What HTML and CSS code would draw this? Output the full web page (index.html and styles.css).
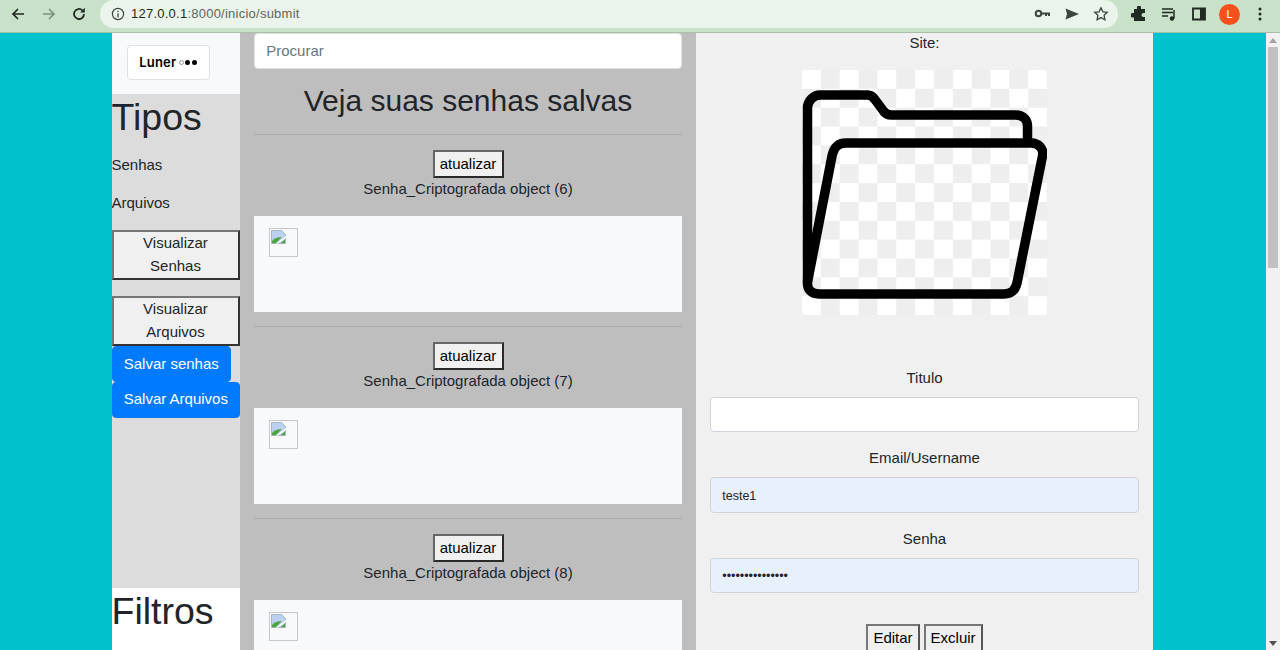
FILE: index.html
```html
<!DOCTYPE html>
<html lang="en">
<head>
  <meta charset="UTF-8">
  <meta name="viewport" content="width=device-width, initial-scale=1.0">
  <title>Luner</title>
  <link rel="stylesheet" href="styles.css">
</head>
<body>
  <!-- barra do navegador -->
  <div class="browser">
    <div class="navs">
      <svg class="ico" viewBox="0 0 16 16"><path d="M14 8H3M8 3L3 8l5 5" fill="none" stroke="#1f2a20" stroke-width="1.7"/></svg>
      <svg class="ico" viewBox="0 0 16 16"><path d="M2 8h11M8 3l5 5-5 5" fill="none" stroke="#7f917f" stroke-width="1.7"/></svg>
      <svg class="ico" viewBox="0 0 16 16"><path d="M13 8a5 5 0 1 1-1.600-3.700" fill="none" stroke="#1f2a20" stroke-width="1.800"/><path d="M13.800 1.800v4.600H9.200z" fill="#1f2a20"/></svg>
    </div>
    <div class="omnibox">
      <svg class="info" viewBox="0 0 14 14"><circle cx="7" cy="7" r="5.600" fill="none" stroke="#3c463c" stroke-width="1.200"/><path d="M7 6.200v4M7 3.800v1.300" stroke="#3c463c" stroke-width="1.300"/></svg>
      <span class="url"><b>127.0.0.1</b>:8000/inicio/submit</span>
      <div class="omni-right">
        <svg class="ico" viewBox="0 0 16 16"><circle cx="4.500" cy="7.500" r="2.800" fill="none" stroke="#3c463c" stroke-width="2"/><path d="M7.500 7.500H15v2.500M12 7.500V10" fill="none" stroke="#3c463c" stroke-width="2"/></svg>
        <svg class="ico" viewBox="0 0 16 16"><path d="M1.500 2.500L15 8 1.500 13.500 3 8z" fill="#3c463c"/></svg>
        <svg class="ico" viewBox="0 0 16 16"><path d="M8 1.800l1.900 4 4.400.5-3.200 3 .8 4.400L8 11.600l-3.900 2.100.8-4.400-3.200-3 4.400-.5z" fill="none" stroke="#3c463c" stroke-width="1.300"/></svg>
      </div>
    </div>
    <div class="tools">
      <svg class="ico" viewBox="0 0 16 16"><path d="M6 1.500a2 2 0 0 1 4 0V3h4v4h-1.500a2 2 0 0 0 0 4H14v4H3v-3.500H1.500a2.200 2.200 0 0 1 0-4.400H3V3h3z" fill="#1f2a20"/></svg>
      <svg class="ico" viewBox="0 0 16 16"><path d="M1 3h11M1 6.500h11M1 10h6" stroke="#1f2a20" stroke-width="1.400"/><path d="M13 4v8.500" stroke="#1f2a20" stroke-width="1.500"/><circle cx="11" cy="12.500" r="2.200" fill="#1f2a20"/></svg>
      <svg class="ico" viewBox="0 0 16 16"><path d="M2 2.500h12v11H2z" fill="none" stroke="#1f2a20" stroke-width="1.800"/><path d="M9 2.500h5v11H9z" fill="#1f2a20"/></svg>
      <span class="avatar">L</span>
      <svg class="ico" viewBox="0 0 16 16"><circle cx="8" cy="3" r="1.500" fill="#1f2a20"/><circle cx="8" cy="8" r="1.500" fill="#1f2a20"/><circle cx="8" cy="13" r="1.500" fill="#1f2a20"/></svg>
    </div>
  </div>

  <div class="viewport">
    <div class="page">
      <div class="wrap">
        <!-- menu esquerdo -->
        <aside class="side">
          <div class="logo-area">
            <div class="logo">
              <span class="logo-txt">Luner</span>
              <i class="dot dot-open"></i><i class="dot"></i><i class="dot"></i>
            </div>
          </div>
          <div class="types">
            <h1 class="side-title">Tipos</h1>
            <a class="side-link" href="#">Senhas</a>
            <a class="side-link" href="#">Arquivos</a>
            <button class="btn-view">Visualizar Senhas</button>
            <button class="btn-view">Visualizar Arquivos</button>
            <a class="btn-blue" href="#">Salvar senhas</a>
            <a class="btn-blue" href="#">Salvar Arquivos</a>
          </div>
          <div class="filters">
            <h1 class="side-title">Filtros</h1>
          </div>
        </aside>

        <!-- lista -->
        <main class="list">
          <input class="field search" type="text" placeholder="Procurar">
          <h2 class="list-title">Veja suas senhas salvas</h2>
          <hr class="line">
          <section class="item">
            <button class="btn-old">atualizar</button>
            <p class="item-name">Senha_Criptografada object (6)</p>
            <div class="card">
              <span class="broken"><svg viewBox="0 0 16 16"><path d="M.5.5h10l4 4v9H.5z" fill="#bcd2f3" stroke="#a9b2c0"/><path d="M1 13v-2c2-3 6-4 10-4l-6 6z" fill="#4fa53c"/><path d="M15 6L5 13.500h2L15 8z" fill="#fff"/><path d="M9.500 13L14 9.500V13z" fill="#4fa53c"/></svg></span>
            </div>
          </section>
          <hr class="line">
          <section class="item">
            <button class="btn-old">atualizar</button>
            <p class="item-name">Senha_Criptografada object (7)</p>
            <div class="card">
              <span class="broken"><svg viewBox="0 0 16 16"><path d="M.5.5h10l4 4v9H.5z" fill="#bcd2f3" stroke="#a9b2c0"/><path d="M1 13v-2c2-3 6-4 10-4l-6 6z" fill="#4fa53c"/><path d="M15 6L5 13.500h2L15 8z" fill="#fff"/><path d="M9.500 13L14 9.500V13z" fill="#4fa53c"/></svg></span>
            </div>
          </section>
          <hr class="line">
          <section class="item">
            <button class="btn-old">atualizar</button>
            <p class="item-name">Senha_Criptografada object (8)</p>
            <div class="card">
              <span class="broken"><svg viewBox="0 0 16 16"><path d="M.5.5h10l4 4v9H.5z" fill="#bcd2f3" stroke="#a9b2c0"/><path d="M1 13v-2c2-3 6-4 10-4l-6 6z" fill="#4fa53c"/><path d="M15 6L5 13.500h2L15 8z" fill="#fff"/><path d="M9.500 13L14 9.500V13z" fill="#4fa53c"/></svg></span>
            </div>
          </section>
        </main>

        <!-- detalhe -->
        <section class="detail">
          <p class="site">Site:</p>
          <div class="folder">
            <svg viewBox="0 0 245 245" width="245" height="245">
              <defs>
                <pattern id="chk" width="37.700" height="37.700" patternUnits="userSpaceOnUse">
                  <rect width="37.700" height="37.700" fill="#eeeeee"/>
                  <rect width="18.850" height="18.850" fill="#fff"/>
                  <rect x="18.850" y="18.850" width="18.850" height="18.850" fill="#fff"/>
                </pattern>
              </defs>
              <rect width="245" height="245" rx="3" fill="url(#chk)"/>
              <path d="M5.500 212V38a13 13 0 0 1 13-13h47c3 0 5 1 7 4l9 12c2 3 4 4 8 4h124c8 0 12 5 12 11v15" fill="none" stroke="#000" stroke-width="9.500" stroke-linejoin="round"/>
              <path d="M5.500 212L30 86c2-9 6-13 14-13h185c8 0 13 6 11.500 13L215 213c-2 8-6 11-13 11H17c-8 0-12-5-11.500-12z" fill="none" stroke="#000" stroke-width="9.500" stroke-linejoin="round"/>
            </svg>
          </div>
          <p class="lbl">Titulo</p>
          <input class="field" type="text">
          <p class="lbl">Email/Username</p>
          <input class="field small filled" type="text" value="teste1">
          <p class="lbl">Senha</p>
          <input class="field small filled" type="password" value="teste1234567890">
          <div class="actions">
            <button class="btn-old">Editar</button>
            <button class="btn-old">Excluir</button>
          </div>
        </section>
      </div>
    </div>
    <div class="scrollbar">
      <span class="arrow"></span>
      <span class="thumb"></span>
      <span class="arrow down"></span>
    </div>
  </div>
</body>
</html>
```

FILE: styles.css
```css
*{box-sizing:border-box;}
html,body{margin:0;padding:0;height:650px;overflow:hidden;}
body{font-family:"Liberation Sans",Arial,sans-serif;font-size:15px;line-height:1.5;color:#212529;display:flex;flex-direction:column;}

/* barra do navegador */
.browser{height:33px;flex:none;background:#c8e1c8;border-bottom:1px solid #a9bfa9;display:flex;align-items:center;padding:0 12px 4px 10px;}
.navs{display:flex;gap:14.500px;width:90px;}
.ico{width:16px;height:16px;flex:none;}
.omnibox{width:1018px;height:28px;background:#eaf4ea;border-radius:14px;display:flex;align-items:center;padding:0 9px 0 11px;}
.info{width:14px;height:14px;margin-right:6px;}
.url{font-size:13px;letter-spacing:.24px;color:#5c675c;}
.url b{font-weight:400;color:#1f2a20;}
.omni-right{margin-left:auto;display:flex;gap:13.500px;}
.tools{display:flex;align-items:center;gap:14px;margin-left:13px;}
.avatar{width:21px;height:21px;border-radius:50%;background:#f4511e;color:#fff;font-size:11px;line-height:21px;text-align:center;margin:0 -2px;}

.viewport{flex:1;display:flex;min-height:0;}
.page{flex:1;background:#00c2cc;padding-left:111.500px;overflow:hidden;}
.wrap{width:1041.500px;height:617px;display:flex;overflow:hidden;}

/* menu esquerdo */
.side{width:128.500px;flex:none;display:flex;flex-direction:column;background:#dcdcdc;}
.logo-area{height:61px;flex:none;background:#f8f9fa;padding:12px 15px;}
.logo{width:83px;height:35px;background:#fff;border:1px solid #dee2e6;border-radius:4px;display:flex;align-items:center;justify-content:center;gap:1.500px;}
.logo-txt{font-family:"Inter","Liberation Sans",sans-serif;font-size:13px;font-weight:600;letter-spacing:.2px;color:#000;margin-right:1px;}
.dot{width:5px;height:5px;border-radius:50%;background:#000;}
.dot-open{background:#fff;border:1px solid #999;}
.types{height:494px;flex:none;}
.side-title{font-size:37.500px;font-weight:400;line-height:46px;margin:0;}
.side-link{display:block;color:#212529;text-decoration:none;line-height:22.500px;margin-top:14px;}
.side-link + .side-link{margin-top:15px;}
.btn-view{display:block;width:128px;height:50px;margin-top:16px;padding:0 20px 1px;background:#f0f0f0;border:2px solid;border-color:#767676 #333 #333 #767676;font:15px/22.500px "Liberation Sans",Arial,sans-serif;color:#212529;}
.btn-blue{display:block;width:fit-content;padding:5.625px 11.250px;background:#007bff;border:1px solid #007bff;color:#fff;text-decoration:none;line-height:22.500px;border-radius:4px;white-space:nowrap;}
.filters{flex:1;background:#fff;}

/* lista */
.list{width:456px;flex:none;background:#bebebe;padding:0 14px;}
.field{display:block;width:100%;height:35.500px;padding:5.625px 11.250px;background:#fff;border:1px solid #ced4da;border-radius:4px;font:15px/22.500px "Liberation Sans",Arial,sans-serif;color:#495057;}
.field::placeholder{color:#6c757d;}
.search{border-color:#dfe2e5;}
.list-title{font-size:30px;font-weight:400;line-height:36px;margin:14.500px 0 0;padding-bottom:.5px;text-align:center;}
.line{height:1px;border:0;background:#aeaeae;margin:14.500px 0 15px;}
.item{text-align:center;}
.btn-old{display:block;height:28px;padding:0 5px;background:#f0f0f0;border:2px solid;border-color:#666 #2a2a2a #2a2a2a #666;font:15px/22.500px "Liberation Sans",Arial,sans-serif;color:#000;}
.item .btn-old{width:71px;margin:0 auto;padding:0;}
.item-name{margin:0 0 15px;line-height:22.500px;}
.card{height:96px;background:#f8f9fa;padding:12px 15px;text-align:left;}
.broken{display:block;width:29px;height:29px;border:1px solid #c8c8c8;padding:1px;}
.broken svg{display:block;width:16px;height:16px;}

/* detalhe */
.detail{flex:1;background:#f0f0f0;padding:0 14px;text-align:center;}
.site{margin:0;line-height:20px;}
.folder{height:313px;padding-top:17px;}
.folder svg{display:block;margin:0 auto;}
.lbl{margin:0 0 7.500px;padding-top:.5px;line-height:22.500px;}
.detail .field{margin-bottom:14.500px;}
.field.small{font-size:12.500px;padding-top:6.500px;padding-bottom:4.750px;}
.field.filled{background:#e8f0fe;color:#212529;}
.actions{margin-top:31px;display:flex;justify-content:center;gap:4px;}
.actions .btn-old{border-color:#777 #555 #555 #777;}

/* barra de rolagem */
.scrollbar{width:14px;flex:none;background:#f1f1f1;display:flex;flex-direction:column;align-items:center;padding:5px 0 4px;}
.arrow{width:0;height:0;border:4px solid transparent;border-top:0;border-bottom:5px solid #a3a3a3;}
.arrow.down{border-bottom:0;border-top:5px solid #505050;margin-top:auto;}
.thumb{width:10px;height:221px;background:#c1c1c1;margin-top:4px;}
```
